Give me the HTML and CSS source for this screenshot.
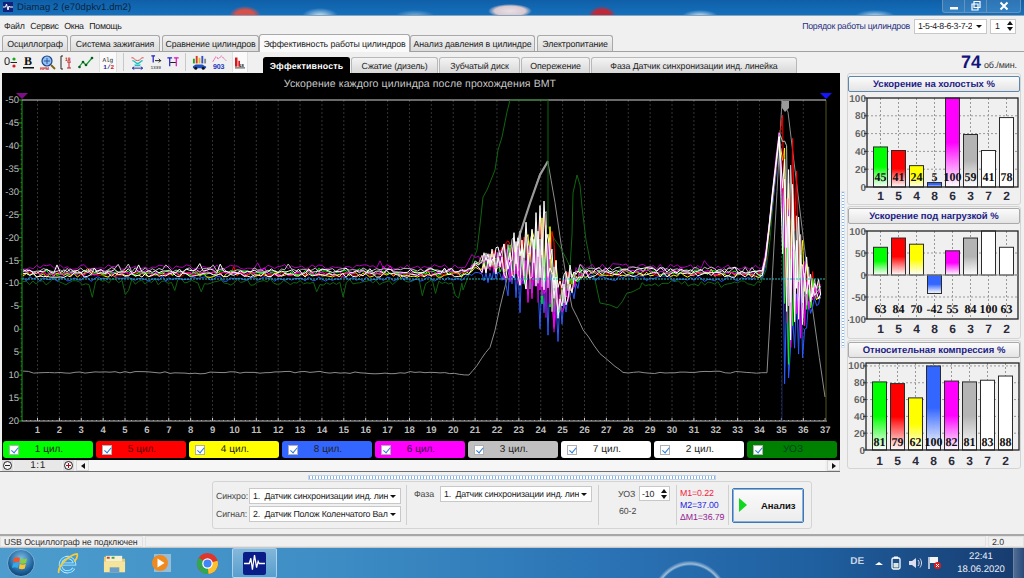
FILE: index.html
```html
<!DOCTYPE html>
<html lang="ru">
<head>
<meta charset="utf-8">
<title>Diamag 2</title>
<link rel="stylesheet" href="styles.css">
</head>
<body>
<header class="titlebar">
  <svg class="app-icon" viewBox="0 0 10 10"><rect width="10" height="10" fill="#12227a"/><path d="M0 5h2.500l1-3 1.500 6 1-4 .8 1H10" fill="none" stroke="#fff" stroke-width="1"/></svg>
  <span class="title-text">Diamag 2 (e70dpkv1.dm2)</span>
  <div class="win-controls">
    <span class="win-btn"><svg viewBox="0 0 10 10" width="10" height="10"><rect x="1" y="6" width="8" height="2.500" fill="#fff"/></svg></span>
    <span class="win-btn"><svg viewBox="0 0 10 10" width="10" height="10"><path d="M3 .5h6v6H3zM1 3h6v6H1z" fill="none" stroke="#fff" stroke-width="1.200"/></svg></span>
    <span class="win-btn win-close"><svg viewBox="0 0 10 10" width="10" height="10"><path d="M1.500 1.500l7 7M8.500 1.500l-7 7" stroke="#fff" stroke-width="2"/></svg></span>
  </div>
</header>

<div class="window">
  <nav class="menubar">
    <span>Файл</span><span>Сервис</span><span>Окна</span><span>Помощь</span>
    <div class="order">
      <span class="order-label">Порядок работы цилиндров</span>
      <span class="combo combo-order"><span class="combo-text">1-5-4-8-6-3-7-2</span><i class="caret"></i></span>
      <span class="spin spin-order"><span>1</span><span class="spin-arrows"><i class="up"></i><i class="down"></i></span></span>
    </div>
  </nav>

  <div class="tabs">
    <span class="tab w-66">Осциллограф</span>
    <span class="tab w-90">Система зажигания</span>
    <span class="tab w-97">Сравнение цилиндров</span>
    <span class="tab tab-active">Эффективность работы цилиндров</span>
    <span class="tab w-125">Анализ давления в цилиндре</span>
    <span class="tab w-76">Электропитание</span>
  </div>

  <div class="toolbar">
    <div class="tools">
      <svg class="tool t-13" viewBox="0 0 13 15"><text x="0" y="10" class="ti-text">0</text><circle cx="10" cy="4" r="1.600" fill="#18a818"/><rect x="6.500" y="7" width="6.500" height="1" fill="#222"/><circle cx="10" cy="11" r="1.600" fill="#e01818"/></svg>
      <svg class="tool t-13" viewBox="0 0 13 15"><text x="2" y="10" class="ti-b">B</text><rect x="1" y="12" width="11" height="1.500" fill="#111"/></svg>
      <svg class="tool t-16" viewBox="0 0 16 15"><circle cx="7" cy="6" r="5" fill="#8fc4f0" stroke="#20408f" stroke-width="1.200"/><path d="M4 6h6M7 3v6" stroke="#20408f" stroke-width=".8"/><path d="M11 10l4 4" stroke="#806010" stroke-width="1.800"/><text x="0" y="14.500" class="ti-rpm">RPM</text></svg>
      <svg class="tool t-12" viewBox="0 0 12 15"><path d="M2 1H0v13h2" fill="none" stroke="#222"/><text x="4" y="6" class="ti-red">18</text><path d="M8 7v6M6 13h4M6 7h4" stroke="#c02020"/></svg>
      <svg class="tool t-16" viewBox="0 0 16 15"><path d="M1 12l4-5 3 3 6-7" fill="none" stroke="#1a9a30" stroke-width="1.200"/><circle cx="5" cy="7" r="1.300" fill="#0a5a20"/><circle cx="8" cy="10" r="1.300" fill="#0a5a20"/><circle cx="14" cy="3" r="1.300" fill="#0a5a20"/><circle cx="1.500" cy="12" r="1.300" fill="#0a5a20"/></svg>
      <span class="tool-pressed"><svg class="tool t-12" viewBox="0 0 12 16"><text x="0" y="7" class="ti-alg">Alg</text><text x="1" y="15" class="ti-half">1/<tspan fill="#e02020">2</tspan></text></svg></span>
      <i class="tool-sep"></i>
      <svg class="tool t-15" viewBox="0 0 15 16"><path d="M1 3c3-1 3 3 6.500 3S11 2 14 3" fill="none" stroke="#e04040"/><path d="M2 6c3 0 3 3 5.500 3S11 6 13 6" fill="none" stroke="#10c0c0" stroke-width="1.500"/><path d="M4 10h7l-1 2H5z" fill="#20c0c0"/><path d="M2 14h11M2 14l2-1.500M2 14l2 1.500M13 14l-2-1.500M13 14l-2 1.500" stroke="#20209a" fill="none"/></svg>
      <svg class="tool t-12" viewBox="0 0 12 16"><path d="M1 1h4M3 1v7" stroke="#2020c0" stroke-width="1.300"/><path d="M5 6h6M9 4l2 2-2 2" stroke="#111" fill="none"/><text x="0" y="15" class="ti-num">1339</text></svg>
      <svg class="tool t-12" viewBox="0 0 12 16"><path d="M0 3h5M2.500 3v9" stroke="#2020d0" stroke-width="1.300"/><path d="M7 3h5M9.500 3v9" stroke="#e010c0" stroke-width="1.300"/><path d="M3 8h6" stroke="#111"/></svg>
      <i class="tool-sep"></i>
      <svg class="tool t-15" viewBox="0 0 16 16"><rect x="1" y="4" width="2" height="5" fill="#18a818"/><rect x="4" y="1" width="2" height="8" fill="#e03030"/><rect x="7" y="3" width="2" height="6" fill="#e0c020"/><rect x="10" y="1" width="2" height="8" fill="#3050d0"/><rect x="13" y="4" width="2" height="5" fill="#888"/><path d="M1 14v-2l3-2h7l3 2h1v2z" fill="#2050c0"/><circle cx="4" cy="14" r="1.600" fill="#111"/><circle cx="12" cy="14" r="1.600" fill="#111"/></svg>
      <svg class="tool t-15" viewBox="0 0 16 16"><path d="M1 7l3-5 3 2 3-3 5 5" fill="none" stroke="#e02090" stroke-dasharray="1.500 1"/><text x="1" y="15" class="ti-903">903</text></svg>
      <span class="tool-pressed"><svg class="tool t-10" viewBox="0 0 12 14"><rect x="0" y="1" width="3" height="11" fill="#d81818"/><rect x="4" y="5" width="2" height="7" fill="#d81818"/><text x="5" y="12" class="ti-num10">18</text><rect y="13" width="12" height="1" fill="#222"/></svg></span>
    </div>
    <div class="subtabs">
      <span class="subtab subtab-active">Эффективность</span>
      <span class="subtab w-87">Сжатие (дизель)</span>
      <span class="subtab w-81">Зубчатый диск</span>
      <span class="subtab w-69">Опережение</span>
      <span class="subtab w-206">Фаза Датчик синхронизации инд. линейка</span>
    </div>
    <div class="rpm"><b>74</b><span>об./мин.</span></div>
  </div>

  <main class="main">
    <section class="scope-col">
      <div class="scope">
        <svg id="plot" class="plot" viewBox="2 73 838 368"></svg>
        <div class="legend">
          <label class="chan c-green"><i class="check"></i><span>1 цил.</span></label>
          <label class="chan c-red"><i class="check"></i><span>5 цил.</span></label>
          <label class="chan c-yellow"><i class="check"></i><span>4 цил.</span></label>
          <label class="chan c-blue"><i class="check"></i><span>8 цил.</span></label>
          <label class="chan c-magenta"><i class="check"></i><span>6 цил.</span></label>
          <label class="chan c-gray"><i class="check"></i><span>3 цил.</span></label>
          <label class="chan c-white"><i class="check"></i><span>7 цил.</span></label>
          <label class="chan c-white"><i class="check"></i><span>2 цил.</span></label>
          <label class="chan c-uoz"><i class="check"></i><span>УОЗ</span></label>
        </div>
      </div>
      <div class="scrollrow">
        <span class="zoom-btn"><i class="zoom-minus"></i></span>
        <span class="zoom-value">1:1</span>
        <span class="zoom-btn"><i class="zoom-plus"></i></span>
        <span class="arrow-btn"><i class="arrow-left"></i></span>
        <span class="track"></span>
        <span class="arrow-btn"><i class="arrow-right"></i></span>
      </div>
    </section>
    <div class="splitter"><span class="split-handle"></span></div>
    <aside class="side">
      <section class="group g1"><div class="group-head head-focus">Ускорение на холостых %</div><svg id="chart1" class="bars" viewBox="0 0 172 112"></svg></section>
      <section class="group g2"><div class="group-head">Ускорение под нагрузкой %</div><svg id="chart2" class="bars" viewBox="0 0 172 112"></svg></section>
      <section class="group g3"><div class="group-head">Относительная компрессия %</div><svg id="chart3" class="bars" viewBox="0 0 172 112"></svg></section>
    </aside>
  </main>

  <section class="bottom">
    <div class="hsplit"></div>
    <div class="controls">
      <div class="ctl-sig">
        <div class="ctl-row"><span class="ctl-label">Синхро:</span><span class="combo combo-wide"><span class="combo-text">1.&nbsp; Датчик синхронизации инд. лин</span><i class="caret"></i></span></div>
        <div class="ctl-row"><span class="ctl-label">Сигнал:</span><span class="combo combo-wide"><span class="combo-text">2.&nbsp; Датчик Полож Коленчатого Вал</span><i class="caret"></i></span></div>
      </div>
      <div class="ctl-phase">
        <span class="ctl-label label-phase">Фаза</span>
        <span class="combo combo-wide"><span class="combo-text">1.&nbsp; Датчик синхронизации инд. лин</span><i class="caret"></i></span>
      </div>
      <div class="ctl-uoz">
        <div class="ctl-row"><span class="ctl-label label-uoz">УОЗ</span><span class="spin spin-uoz"><span>-10</span><span class="spin-arrows"><i class="up"></i><i class="down"></i></span></span></div>
        <span class="ctl-label label-602">60-2</span>
      </div>
      <div class="ctl-meas">
        <span class="m1">М1=0.22</span>
        <span class="m2">М2=37.00</span>
        <span class="m3">ΔМ1=36.79</span>
      </div>
      <button class="analyze"><i class="play"></i><span>Анализ</span></button>
    </div>
  </section>

  <footer class="status">
    <span class="pane pane-a">USB Осциллограф не подключен</span>
    <span class="pane pane-b"></span>
    <span class="pane pane-c">2.0</span>
  </footer>
</div>

<div class="taskbar">
  <svg class="orb" viewBox="0 0 28 28">
    <defs><radialGradient id="orbg" cx=".5" cy=".35" r=".7"><stop offset="0" stop-color="#7fc0e8"/><stop offset=".7" stop-color="#1a5f9a"/><stop offset="1" stop-color="#0d3a66"/></radialGradient></defs>
    <circle cx="14" cy="14" r="13.500" fill="url(#orbg)" stroke="#9cc4e0" stroke-opacity=".7"/>
    <path d="M7 9c2-1 4-1 6 0l-1 4.500c-2-1-4-1-6 0z" fill="#f0562a"/><path d="M14 9.500c2 1 4 1 6 0l-1 4.500c-2 1-4 1-6 0z" fill="#8ccf3c"/>
    <path d="M6 14.500c2-1 4-1 5.800 0l-1 4.500c-2-1-4-1-5.800 0z" fill="#35a8ea"/><path d="M12.800 15c2 1 4 1 6 0l-1 4.500c-2 1-4 1-6 0z" fill="#fcc52e"/>
  </svg>
  <svg class="task-icon ie" viewBox="0 0 24 24"><path d="M18.500 17A7.500 7.500 0 1 1 19.500 12.500H6" fill="none" stroke="#c8eeff" stroke-width="3.200"/><path d="M18.500 17A7.500 7.500 0 1 1 19.500 12.500H6" fill="none" stroke="#38a8e8" stroke-width="1.600"/><path d="M3 22C1 16 13 3 22 2c1 3-1 6-3 8" fill="none" stroke="#f6cc3a" stroke-width="1.800"/></svg>
  <svg class="task-icon folder" viewBox="0 0 24 24"><path d="M1 5h8l2 2h12v14H1z" fill="#e8c76a"/><rect x="3" y="4" width="17" height="6" fill="#f4f0d0"/><rect x="4" y="5" width="3" height="2" fill="#d04030"/><rect x="9" y="5" width="3" height="2" fill="#40a040"/><path d="M1 10h22v11H1z" fill="#f6e49a"/><path d="M7 16h10v5H7z" fill="#6a9ec8"/></svg>
  <svg class="task-icon media" viewBox="0 0 22 22"><rect x="4" y="2" width="17" height="18" fill="#a8c8dc" fill-opacity=".8"/><circle cx="10" cy="11" r="8" fill="#f08a20"/><path d="M7.500 6.500l7 4.500-7 4.500z" fill="#fff"/></svg>
  <svg class="task-icon chrome" viewBox="0 0 24 24"><circle cx="12" cy="12" r="11" fill="#e0352b"/><path d="M12 12L2.500 17.500A11 11 0 0 1 3 6z" fill="#2fa84f"/><path d="M12 12l-9.500 5.500A11 11 0 0 0 13 23z" fill="#2fa84f"/><path d="M12 12l10.500-3A11 11 0 0 1 13 23z" fill="#fbc02d"/><circle cx="12" cy="12" r="5.500" fill="#fff"/><circle cx="12" cy="12" r="4.200" fill="#4285f4"/></svg>
  <span class="task-active"><svg class="diamag" viewBox="0 0 22 22"><rect width="22" height="22" rx="2" fill="#0a1c88"/><path d="M1 11h5l1.500-5 1.500 11 2-14 2 12 1.500-6 1 2H21" fill="none" stroke="#fff" stroke-width="1.200"/></svg></span>
  <div class="tray">
    <span class="lang">DE</span>
    <svg class="tray-ic" viewBox="0 0 10 14" width="10" height="14"><path d="M1 9l4-3 4 3z" fill="#fff"/></svg>
    <svg class="tray-ic" viewBox="0 0 12 14" width="12" height="14"><rect x="2" y="2" width="8" height="11" rx="1.500" fill="none" stroke="#fff" stroke-width="1.300"/><rect x="4" y="0.500" width="4" height="2" fill="#fff"/><rect x="3.500" y="7" width="5" height="4.500" fill="#d8e8d8"/></svg>
    <svg class="tray-ic" viewBox="0 0 14 14" width="14" height="14"><path d="M1 5h3l4-3v10L4 9H1z" fill="#dde"/><path d="M10 4c1.500 2 1.500 4 0 6M12 2.500c2 3 2 6 0 9" fill="none" stroke="#dde"/></svg>
    <svg class="tray-ic" viewBox="0 0 14 14" width="14" height="14"><path d="M1 1v12" stroke="#fff" stroke-width="1.300"/><path d="M2 1h8v6H2z" fill="#f4f4f4"/><circle cx="9.500" cy="9.500" r="3.500" fill="#d82020"/><path d="M8 8l3 3M11 8l-3 3" stroke="#fff"/></svg>
    <div class="clock"><span>22:41</span><span>18.06.2020</span></div>
    <span class="show-desktop"></span>
  </div>
</div>
<script src="charts.js"></script>
</body>
</html>
```

FILE: styles.css
```css
* { box-sizing: border-box; }
html, body { margin: 0; padding: 0; }
body {
  width: 1024px;
  height: 578px;
  overflow: hidden;
  display: flex;
  flex-direction: column;
  font-family: "Liberation Sans", Arial, sans-serif;
  font-size: 8.800px;
  letter-spacing: -.1px;
  text-rendering: geometricPrecision;
  color: #333;
  background: #1a5f9a;
}

/* title strip */
.titlebar {
  height: 16px;
  flex: none;
  display: flex;
  align-items: center;
  padding: 0 3px 1px 3px;
  background:
    radial-gradient(ellipse 16px 10px at 245px 16px, #d8504a 0, #d8504a 60%, transparent 100%),
    radial-gradient(ellipse 18px 8px at 320px 16px, #cfe6f4 0, transparent 100%),
    radial-gradient(ellipse 22px 7px at 510px 11px, #e8e0e4 0, #d8c8d0 70%, transparent 100%),
    radial-gradient(ellipse 14px 10px at 602px 16px, #c02838 0, #c02838 60%, transparent 100%),
    radial-gradient(ellipse 20px 6px at 415px 16px, #7fb0d8 0, transparent 100%),
    radial-gradient(ellipse 18px 6px at 700px 16px, #cfe6f4 0, transparent 100%),
    radial-gradient(ellipse 20px 6px at 875px 16px, #b8d8f0 0, transparent 100%),
    linear-gradient(#0f5fa8, #1670bc);
  border-bottom: 1px solid #8aa4bc;
}
.app-icon { width: 10px; height: 10px; flex: none; }
.title-text { margin-left: 4px; font-size: 9.500px; letter-spacing: .1px; color: #0c2440; }
.win-controls { margin-left: auto; display: flex; align-self: flex-start; height: 13px; border: 1px solid #6a92b8; border-top: 0; border-radius: 0 0 3px 3px; background: rgba(190, 215, 240, .18); }
.win-btn { width: 22px; display: flex; align-items: center; justify-content: center; border-right: 1px solid #6a92b8; }
.win-close { width: 33px; border-right: 0; }

.window { flex: 1; min-height: 0; display: flex; flex-direction: column; background: #f0f0f0; }

/* menu */
.menubar { height: 18px; flex: none; display: flex; align-items: center; gap: 5.500px; padding: 2px 0 0 4px; color: #222; letter-spacing: -.25px; }
.order { margin-left: auto; display: flex; align-items: center; padding-right: 8px; }
.order-label { color: #2a3080; margin-right: 4px; white-space: nowrap; }
.combo { display: flex; align-items: center; justify-content: space-between; background: #fff; border: 1px solid #c8c8c8; padding: 0 4px 0 3px; color: #222; white-space: nowrap; overflow: hidden; }
.combo-text { overflow: hidden; }
.combo-order { width: 73px; height: 15px; }
.combo-order .combo-text { letter-spacing: -.35px; }
.caret { flex: none; width: 0; height: 0; border-left: 3.500px solid transparent; border-right: 3.500px solid transparent; border-top: 3.500px solid #111; margin-left: 2px; }
.spin { display: flex; align-items: center; justify-content: space-between; background: #fff; border: 1px solid #c8c8c8; padding: 0 2px 0 4px; color: #222; }
.spin-order { width: 26px; height: 15px; margin-left: 3px; }
.spin-arrows { display: flex; flex-direction: column; gap: 2px; }
.spin-arrows i { display: block; width: 0; height: 0; border-left: 3px solid transparent; border-right: 3px solid transparent; }
.spin-arrows .up { border-bottom: 4px solid #111; }
.spin-arrows .down { border-top: 4px solid #111; }

/* tabs */
.tabs { height: 18px; flex: none; display: flex; align-items: flex-end; gap: 2px; padding-left: 2px; border-bottom: 1px solid #a0a0a0; }
.tab { height: 16px; flex: none; display: flex; align-items: center; justify-content: center; border: 1px solid #a8a8a8; border-bottom: 0; border-radius: 3px 3px 0 0; background: linear-gradient(#f2f2f2, #dcdcdc); color: #222; white-space: nowrap; }
.w-66 { width: 66px; }
.w-90 { width: 90px; }
.w-97 { width: 97px; }
.w-125 { width: 125px; }
.w-76 { width: 76px; }
.tab-active { width: 151px; height: 18px; margin: 0 -2px -1px -2px; background: #fafafa; position: relative; z-index: 1; }

/* toolbar */
.toolbar { height: 21px; flex: none; display: flex; align-items: flex-end; }
.tools { display: flex; align-items: center; width: 263px; height: 20px; padding: 0 0 0 4px; gap: 5px; align-self: flex-start; flex: none; }
.tool { flex: none; height: 15px; display: block; overflow: visible; }
.t-10 { width: 10px; }
.t-12 { width: 12px; }
.t-13 { width: 13px; }
.t-15 { width: 15px; }
.t-16 { width: 16px; }
.tool-pressed { background: #fafafa; height: 20px; padding: 0 2px; display: flex; align-items: center; border-left: 1px solid #e0e0e0; border-right: 1px solid #e0e0e0; }
.tool-sep { width: 1px; height: 18px; background: #c8c8c8; margin: 0 1px; flex: none; }
.ti-text { font: 11px "Liberation Sans", sans-serif; fill: #222; }
.ti-b { font: bold 12px "Liberation Serif", serif; fill: #111; }
.ti-rpm { font: bold 4.200px "Liberation Sans", sans-serif; fill: #c02020; }
.ti-red { font: bold 5px "Liberation Sans", sans-serif; fill: #c02020; }
.ti-alg { font: 6.500px "Liberation Mono", monospace; fill: #222; }
.ti-half { font: bold 6.500px "Liberation Mono", monospace; fill: #20209a; }
.ti-num { font: 4.800px "Liberation Mono", monospace; fill: #222; }
.ti-num10 { font: bold 5px "Liberation Sans", sans-serif; fill: #222; }
.ti-903 { font: bold 7.500px "Liberation Sans", sans-serif; fill: #2030c0; }

.subtabs { display: flex; height: 16px; gap: 1px; flex: none; }
.subtab { height: 16px; display: flex; align-items: center; justify-content: center; border: 1px solid #b8b8b8; border-bottom: 0; border-radius: 3px 3px 0 0; background: linear-gradient(#f4f4f4, #d8d8d8); color: #222; white-space: nowrap; }
.subtab-active { width: 87px; background: #000; border-color: #000; color: #fff; font-weight: bold; letter-spacing: .2px; }
.w-87 { width: 87px; }
.w-81 { width: 81px; }
.w-69 { width: 69px; }
.w-206 { width: 206px; }
.rpm { margin-left: auto; display: flex; align-items: baseline; padding-right: 7px; align-self: center; }
.rpm b { font-size: 18px; letter-spacing: 0; color: #14147c; margin-right: 3px; }
.rpm span { font-size: 9px; color: #333; }

/* main area */
.main { height: 399px; flex: none; display: flex; }
.scope-col { width: 840px; flex: none; padding-left: 2px; display: flex; flex-direction: column; }
.scope { background: #000; height: 387px; flex: none; display: flex; flex-direction: column; }
.plot { width: 838px; height: 368px; display: block; flex: none; }
.legend { display: flex; gap: 3px; padding: 0 0 0 1px; }
.chan { width: 90px; height: 17px; border-radius: 3px; display: flex; align-items: center; padding-left: 6px; font-size: 10px; letter-spacing: 0; color: #222; flex: none; }
.chan span { flex: 1; text-align: center; padding-right: 14px; }
.check { width: 10px; height: 10px; background: #fff; border: 1px solid #b0b0b0; position: relative; flex: none; }
.check::after { content: ""; position: absolute; left: 2.500px; top: .5px; width: 3px; height: 5.500px; border: solid #2a7ae0; border-width: 0 1.500px 1.500px 0; transform: rotate(40deg); }
.c-green { background: #00ff00; }
.c-red { background: #ff0000; color: #5a0000; }
.c-yellow { background: #ffff00; }
.c-blue { background: #3366ff; }
.c-magenta { background: #ff00ff; color: #400040; }
.c-gray { background: #c0c0c0; }
.c-white { background: #fff; }
.c-uoz { background: #008000; color: #042; }

.scrollrow { height: 12px; flex: none; display: flex; align-items: center; border-bottom: 1px solid #707070; margin-left: -2px; padding-left: 2px; }
.zoom-btn { width: 11px; height: 11px; display: flex; align-items: center; justify-content: center; background: #ddd; flex: none; }
.zoom-minus, .zoom-plus { display: block; width: 9px; height: 9px; border-radius: 50%; border: 1px solid #222; background: #f4f4f4; position: relative; }
.zoom-minus::after, .zoom-plus::after { content: ""; position: absolute; left: 1px; top: 2.500px; width: 5px; height: 1.500px; background: #222; }
.zoom-plus::before { content: ""; position: absolute; left: 2.800px; top: 1px; width: 1.500px; height: 5px; background: #a01020; }
.zoom-plus::after { background: #a01020; }
.zoom-value { width: 48px; text-align: center; background: #e8e8e8; font-size: 10px; letter-spacing: .5px; margin: 0 1px; height: 11px; line-height: 11px; flex: none; color: #222; }
.arrow-btn { width: 13px; height: 11px; background: #f4f4f4; border: 1px solid #d8d8d8; display: flex; align-items: center; justify-content: center; flex: none; margin-left: 2px; }
.arrow-left { width: 0; height: 0; border-top: 3.500px solid transparent; border-bottom: 3.500px solid transparent; border-right: 4px solid #111; }
.arrow-right { width: 0; height: 0; border-top: 3.500px solid transparent; border-bottom: 3.500px solid transparent; border-left: 4px solid #111; }
.track { flex: 1; height: 11px; background: #f6f6f6; }

.splitter { width: 6px; flex: none; display: flex; align-items: center; justify-content: center; padding-bottom: 6px; }
.split-handle { width: 4px; height: 157px; border: 1px solid #d8e4f4; background: repeating-linear-gradient(#7fb4ec 0 1px, #fff 1px 3px); }

.side { flex: 1; display: flex; flex-direction: column; gap: 1px; padding: 0 3px 0 1px; min-width: 0; }
.group { border: 1px solid #d4d4d4; border-radius: 3px; display: flex; flex-direction: column; padding: 1px 0 0 0; flex: none; align-items: center; }
.g1 { height: 132px; padding-top: 2px; }
.g2 { height: 133px; }
.g3 { height: 129px; }
.group-head { width: 172px; height: 16px; flex: none; display: flex; align-items: center; justify-content: center; border: 1px solid #aaa; border-radius: 2px; background: linear-gradient(#fbfbfb, #e4e4e4); color: #1c1c86; font-weight: bold; font-size: 9.500px; letter-spacing: 0; }
.head-focus { border-color: #5f86ac; }
.bars { width: 172px; height: 112px; display: block; flex: none; }
.bar-val { font: bold 12px "Liberation Serif", serif; letter-spacing: 0; fill: #111; text-anchor: middle; }
.bar-x { font: bold 12px "Liberation Sans", sans-serif; letter-spacing: 0; fill: #2a2a3a; text-anchor: middle; }
.bar-y { font: bold 10px "Liberation Sans", sans-serif; letter-spacing: 0; fill: #666; text-anchor: end; }
.plot-title { font: 10.500px "Liberation Sans", sans-serif; letter-spacing: .1px; fill: #c8c8c8; text-anchor: middle; }
.plot-y { font: 9.500px "Liberation Sans", sans-serif; letter-spacing: 0; fill: #bdbdbd; text-anchor: end; }
.plot-x { font: bold 9.500px "Liberation Sans", sans-serif; letter-spacing: 0; fill: #bdbdbd; text-anchor: middle; }

/* bottom */
.bottom { flex: 1; min-height: 0; display: flex; flex-direction: column; align-items: center; border-bottom: 2px solid #a8a8a8; }
.hsplit { width: 408px; height: 5px; margin: 3px 0 0 0; flex: none; border: 1px solid #c8d4e4; background: repeating-linear-gradient(90deg, #7fb4ec 0 1px, #fff 1px 3px); }
.controls { width: 600px; height: 48px; margin: 1px 0 0 212px; align-self: flex-start; display: flex; align-items: center; border: 1px solid #d4d4d4; border-radius: 3px; padding: 0 0 0 3px; color: #444; flex: none; }
.ctl-sig { display: flex; flex: none; flex-direction: column; gap: 2px; width: 191px; padding-right: 5px; border-right: 1px solid #d0d0d0; height: 40px; justify-content: center; }
.ctl-row { display: flex; align-items: center; justify-content: space-between; }
.ctl-label { white-space: nowrap; }
.combo-wide { width: 152px; height: 16px; letter-spacing: -.2px; }
.ctl-phase { width: 192px; flex: none; display: flex; align-items: flex-start; height: 40px; padding: 1px 6px 0 7px; border-right: 1px solid #d0d0d0; justify-content: space-between; }
.label-phase { padding-top: 3px; }
.ctl-uoz { width: 78px; flex: none; height: 40px; padding: 1px 6px 0 19px; border-right: 1px solid #d0d0d0; display: flex; flex-direction: column; gap: 5px; }
.spin-uoz { width: 31px; height: 15px; padding-left: 2px; }
.label-602 { padding-left: 1px; }
.ctl-meas { width: 52px; height: 40px; padding-left: 3px; display: flex; flex-direction: column; justify-content: center; gap: 2px; line-height: 10px; border-right: 1px solid #d0d0d0; flex: none; white-space: nowrap; }
.m1 { color: #f02040; }
.m2 { color: #2020e0; }
.m3 { color: #902090; }
.analyze { width: 72px; height: 35px; margin-left: 3px; flex: none; display: flex; align-items: center; gap: 14px; padding: 0 0 0 6px; border: 1px solid #3a78b8; border-radius: 2px; outline: 1px solid #8ab0d8; outline-offset: -2px; background: linear-gradient(#fbfbfb, #ececec); font: bold 9.500px "Liberation Sans", sans-serif; color: #111; }
.play { width: 0; height: 0; border-top: 7px solid transparent; border-bottom: 7px solid transparent; border-left: 8px solid #10d820; }

/* status */
.status { height: 12px; flex: none; display: flex; gap: 2px; color: #333; border-bottom: 1px solid #c8c8c8; white-space: nowrap; }
.pane { display: flex; align-items: center; padding-left: 3px; border: 1px solid #e2e2e2; background: #f0f0f0; }
.pane-a { width: 143px; flex: none; }
.pane-b { flex: 1; }
.pane-c { width: 36px; flex: none; }

/* taskbar */
.taskbar {
  height: 30px;
  flex: none;
  display: flex;
  align-items: center;
  padding-left: 7px;
  background:
    radial-gradient(ellipse 60px 70px at 690px 60px, transparent 60%, rgba(255, 255, 255, .55) 63%, transparent 68%),
    linear-gradient(90deg, #4d9ccd 0, #3f8fc6 30%, #2a72b4 60%, #1f5f9f 80%, #173a6d 100%);
}
.orb { width: 28px; height: 28px; flex: none; }
.task-icon { width: 23px; height: 23px; flex: none; }
.ie { margin-left: 21px; }
.folder { margin-left: 24px; }
.media { margin-left: 24px; width: 22px; height: 22px; }
.chrome { margin-left: 24px; }
.task-active { margin-left: 13px; width: 45px; height: 30px; display: flex; align-items: center; justify-content: center; background: linear-gradient(rgba(255, 255, 255, .35), rgba(255, 255, 255, .12)); border: 1px solid rgba(220, 235, 250, .6); border-radius: 2px; flex: none; }
.diamag { width: 23px; height: 23px; display: block; }
.tray { margin-left: auto; display: flex; align-items: center; height: 100%; color: #e8eef6; }
.lang { font-size: 10px; font-weight: bold; color: #c8d4e4; margin-right: 10px; padding-bottom: 4px; }
.tray-ic { margin-right: 6px; flex: none; }
.clock { width: 60px; margin-left: 3px; margin-right: 2px; display: flex; flex-direction: column; align-items: center; gap: 2px; font-size: 9.500px; line-height: 11px; letter-spacing: 0; }
.show-desktop { width: 11px; height: 100%; background: linear-gradient(90deg, rgba(255, 255, 255, .25), rgba(255, 255, 255, .08)); border-left: 1px solid rgba(255, 255, 255, .3); }
```

FILE: charts.js
```js
var NS = "http://www.w3.org/2000/svg";
function el(parent, name, attrs, text) {
  var n = document.createElementNS(NS, name);
  for (var k in attrs) n.setAttribute(k, attrs[k]);
  if (text !== undefined) n.textContent = text;
  parent.appendChild(n);
  return n;
}
function rng(seed) {
  return function () {
    seed |= 0; seed = seed + 0x6D2B79F5 | 0;
    var t = Math.imul(seed ^ seed >>> 15, 1 | seed);
    t = t + Math.imul(t ^ t >>> 7, 61 | t) ^ t;
    return ((t ^ t >>> 14) >>> 0) / 4294967296;
  };
}
function interp(table, x) {
  if (x <= table[0][0]) return table[0][1];
  for (var i = 1; i < table.length; i++) {
    if (x <= table[i][0]) {
      var a = table[i - 1], b = table[i];
      return a[1] + (b[1] - a[1]) * (x - a[0]) / (b[0] - a[0]);
    }
  }
  return table[table.length - 1][1];
}
function pts(list) { return list.map(function (p) { return p[0].toFixed(1) + "," + p[1].toFixed(1); }).join(" "); }

/* ---------- oscilloscope ---------- */
(function () {
  var s = document.getElementById("plot");
  var L = 22, R = 826, T = 100, B = 421;
  var yOf = function (v) { return T + (v + 50) * (B - T) / 70; };
  var xOf = function (n) { return 37.5 + (n - 1) * 21.88; };

  el(s, "text", { x: 420, y: 87, "class": "plot-title" }, "Ускорение каждого цилиндра после прохождения ВМТ");

  var n, v;
  for (n = 1; n <= 36; n++) {
    el(s, "line", { x1: xOf(n), x2: xOf(n), y1: T, y2: B, stroke: "#333", "stroke-dasharray": "2 2" });
  }
  for (n = 1; n <= 37; n++) {
    el(s, "text", { x: xOf(n), y: 433, "class": "plot-x" }, String(n));
    el(s, "line", { x1: xOf(n), x2: xOf(n), y1: B - 3, y2: B, stroke: "#ccc" });
  }
  for (n = 22; n < R; n += 4.38) el(s, "line", { x1: n, x2: n, y1: B - 1, y2: B, stroke: "#999" });
  for (v = -50; v <= 20; v += 5) {
    el(s, "text", { x: 19, y: yOf(v) + 3, "class": "plot-y" }, String(v));
    el(s, "line", { x1: 18, x2: L, y1: yOf(v), y2: yOf(v), stroke: "#1f9a1f" });
  }
  for (v = -50; v <= 20; v += 1) el(s, "line", { x1: 20.500, x2: L, y1: yOf(v), y2: yOf(v), stroke: "#167016" });
  el(s, "line", { x1: L, x2: L, y1: T, y2: B, stroke: "#18a018", "stroke-width": 1 });
  el(s, "line", { x1: L, x2: R + 1, y1: B, y2: B, stroke: "#bbb" });
  el(s, "line", { x1: R, x2: R, y1: T, y2: B, stroke: "#55551e" });
  el(s, "line", { x1: L, x2: R, y1: T, y2: T, stroke: "#d4d4d4", "stroke-width": 1 });
  el(s, "line", { x1: 782, x2: 782, y1: 375, y2: B, stroke: "#14245a" });
  el(s, "polygon", { points: "16,93 28,93 22,99", fill: "#7c0f84" });
  el(s, "polygon", { points: "820,93 832,93 826,99", fill: "#1414ff" });

  /* engine-position trace */
  var grayThin = [[23,372],[60,373],[120,372],[200,373],[300,372],[380,373],[440,372],[469,375],[477,366],[490,347],[495,330],[500,307],[508,275],[517,243],[530,203],[540,173]];
  var grayDown = [[548,162],[555,203],[565,270],[572,307],[583,330],[600,353],[615,366],[623,372],[660,373],[720,372],[767,373],[782,100]];
  var grayEnd = [[788,112],[808,277],[825,397]];
  var r0 = rng(7);
  function jitter(list) {
    var out = [];
    for (var i = 0; i < list.length - 1; i++) {
      var a = list[i], b = list[i + 1], d = b[0] - a[0];
      var steps = Math.max(1, Math.round(d / 5));
      for (var j = 0; j < steps; j++) {
        var t = j / steps;
        out.push([a[0] + d * t, a[1] + (b[1] - a[1]) * t + (d > 10 ? (r0() - .5) * 1.800 : (r0() - .5) * .8)]);
      }
    }
    out.push(list[list.length - 1]);
    return out;
  }
  el(s, "polyline", { points: pts(jitter(grayThin.concat(grayDown, grayEnd))), fill: "none", stroke: "#8c8c8c", "stroke-width": 1 });
  el(s, "polyline", { points: "518,240 530,203 540,175 548,161", fill: "none", stroke: "#9a9a9a", "stroke-width": 2.200 });
  el(s, "polygon", { points: "782,101 789,101 789,108 785,112 782,108", fill: "#9a9a9a" });

  /* ignition-timing trace */
  var r1 = rng(21), uoz = [], x;
  for (x = 23; x < 463; x += 3.300) {
    var dip = r1() > .9 ? 8 + r1() * 8 : 0;
    uoz.push([x, 282 + (r1() - .5) * 7 + dip]);
  }
  uoz = uoz.concat([[463,290],[470,272],[473,260],[477,250],[480,225],[483,197],[487,190],[495,170],[498,150],[502,137],[507,112],[510,100],[548,100],[548,227],[555,240],[560,247],[566,258],[570,267],[572,235],[573,193],[577,175],[580,185],[582,207],[586,240],[590,260],[595,280],[600,303],[610,305],[617,308],[622,302],[627,293],[632,292],[640,288]]);
  for (x = 642; x < 764; x += 3.300) uoz.push([x, 284 + (r1() - .5) * 7]);
  uoz = uoz.concat([[766,270],[770,240],[775,180],[780,130],[782,180],[786,250],[790,225],[792,212],[795,215],[798,240],[800,290],[808,300]]);
  el(s, "polyline", { points: pts(uoz), fill: "none", stroke: "#0e660e", "stroke-width": 1 });

  /* cylinder traces */
  var center = [[22,274],[465,274],[475,266],[500,262],[548,262],[552,288],[560,300],[570,285],[580,273],[600,273],[764,274],[782,112],[783,245],[800,280],[810,292],[824,294]];
  var amp = [[22,2.400],[465,2.400],[480,5],[500,10],[530,26],[548,36],[552,34],[560,14],[570,9],[580,5],[600,2.800],[764,2.800],[782,4],[783,90],[795,65],[805,24],[815,8],[824,3]];
  var cyl = [
    { c: "#2a5cff", off: 5, bias: 1.350 },
    { c: "#ffff00", off: 1, bias: -.3 },
    { c: "#ff0000", off: 0, bias: -.7 },
    { c: "#00ff00", off: -1, bias: .2 },
    { c: "#b000b8", off: -7, bias: .6 },
    { c: "#ff00ff", off: -1, bias: .7 },
    { c: "#c0c0c0", off: -4, bias: -.2 },
    { c: "#ffffff", off: -3, bias: -.9 },
    { c: "#ffffff", off: 1, bias: .05 }
  ];
  cyl.forEach(function (cy, i) {
    var r = rng(100 + i * 37), line = [], sign = 1, x = 23;
    while (x <= 823) {
      var a = interp(amp, x), c = interp(center, x);
      var busy = a > 5;
      var k = busy ? sign * (.15 + r() * 1.050) + cy.bias * (.3 + r() * .7) : (r() - .5) * 2;
      if (r() > .2) sign = -sign;
      var off = cy.off * (a > 40 ? 0 : 1);
      var y = c + off + a * k;
      if (!busy && r() > .975) y -= 5;
      if (y > 392) y = 392 - r() * 40;
      line.push([x, Math.max(T + 2, y)]);
      x += busy ? 2 : 3.400;
    }
    el(s, "polyline", { points: pts(line), fill: "none", stroke: cy.c, "stroke-width": 1, "stroke-linejoin": "bevel" });
  });

  /* top-dead-centre reference line */
  el(s, "line", { x1: L, x2: R, y1: 279, y2: 279, stroke: "#2ab8c0", "stroke-dasharray": "2 1" });
})();

/* ---------- bar charts ---------- */
(function () {
  var defs = el(document.getElementById("chart1"), "defs", {});
  var fills = { g: "#00ff00", r: "#ff0000", y: "#ffff00", b: "#3366ff", m: "#ff00ff", s: "#b4b4b4", w: "#ffffff" };
  Object.keys(fills).forEach(function (k) {
    var g = el(defs, "linearGradient", { id: "bar-" + k, x1: 0, y1: 0, x2: 0, y2: 1 });
    el(g, "stop", { offset: 0, "stop-color": fills[k] });
    el(g, "stop", { offset: .5, "stop-color": fills[k] });
    el(g, "stop", { offset: 1, "stop-color": "#ffffff", "stop-opacity": k === "w" ? 1 : .9 });
  });
  var order = ["g", "r", "y", "b", "m", "s", "w", "w"];
  var names = [1, 5, 4, 8, 6, 3, 7, 2];

  function chart(id, o) {
    var s = document.getElementById(id);
    var yOf = function (v) { return o.top + (o.max - v) * (o.bottom - o.top) / (o.max - o.min); };
    var i;
    el(s, "rect", { x: o.left, y: o.top, width: o.right - o.left, height: o.bottom - o.top, fill: "#f0f0f0" });
    o.ticks.forEach(function (t) {
      el(s, "text", { x: o.left - 1, y: yOf(t) + 3.500, "class": "bar-y" }, String(t));
      el(s, "line", { x1: o.left - 3, x2: o.left, y1: yOf(t), y2: yOf(t), stroke: "#333" });
      if (t !== o.max && t !== o.min) {
        el(s, "line", { x1: o.left, x2: o.right, y1: yOf(t), y2: yOf(t), stroke: "#999", "stroke-dasharray": "2 2" });
      }
    });
    var zero = yOf(0);
    for (i = 0; i < 8; i++) {
      var cx = o.left + 13.500 + i * 18;
      el(s, "line", { x1: cx, x2: cx, y1: o.top, y2: o.bottom, stroke: "#999", "stroke-dasharray": "2 2" });
    }
    o.values.forEach(function (v, i) {
      var cx = o.left + 13.500 + i * 18;
      var y = yOf(Math.max(v, 0)), h = Math.abs(yOf(v) - zero);
      el(s, "rect", { x: cx - 7, y: y, width: 14, height: h, fill: "url(#bar-" + order[i] + ")", stroke: "#2a2a2a", "stroke-width": 1 });
      el(s, "text", { x: cx, y: o.labelY, "class": "bar-val" }, String(v));
      el(s, "text", { x: cx, y: o.axisY, "class": "bar-x" }, String(names[i]));
    });
    el(s, "rect", { x: o.left, y: o.top, width: o.right - o.left, height: o.bottom - o.top, fill: "none", stroke: "#222", "stroke-width": 1.300 });
    if (o.min < 0) el(s, "line", { x1: o.left, x2: o.right, y1: zero, y2: zero, stroke: "#888", "stroke-width": 1.200 });
  }

  chart("chart1", { left: 19, right: 170, top: 6, bottom: 95, min: 0, max: 100, ticks: [0, 20, 40, 60, 80, 100], labelY: 89, axisY: 108, values: [45, 41, 24, 5, 100, 59, 41, 78] });
  chart("chart2", { left: 19, right: 170, top: 7, bottom: 95, min: -100, max: 100, ticks: [-100, -50, 0, 50, 100], labelY: 89, axisY: 109, values: [63, 84, 70, -42, 55, 84, 100, 63] });
  chart("chart3", { left: 18, right: 171, top: 5, bottom: 92, min: 0, max: 103.500, ticks: [0, 20, 40, 60, 80, 100], labelY: 88, axisY: 107, values: [81, 79, 62, 100, 82, 81, 83, 88] });
})();
```
